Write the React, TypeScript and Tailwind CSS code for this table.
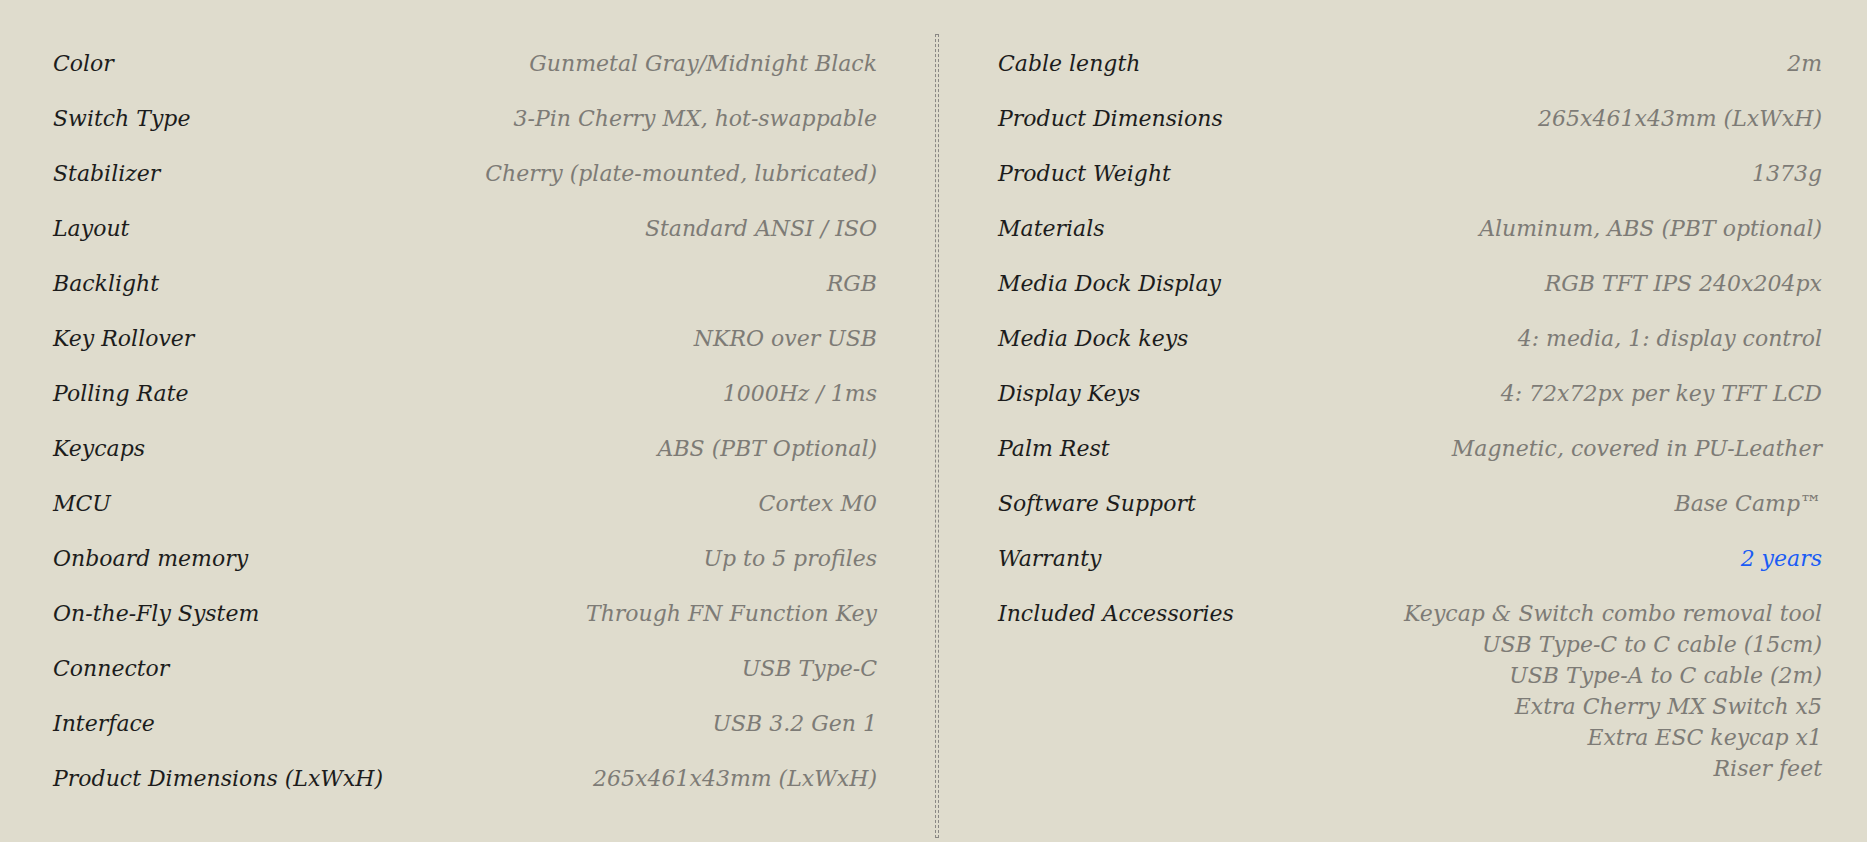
import React from "react"

type Spec = { label: string; value: string | string[]; link?: boolean }

const leftSpecs: Spec[] = [
  { label: "Color", value: "Gunmetal Gray/Midnight Black" },
  { label: "Switch Type", value: "3-Pin Cherry MX, hot-swappable" },
  { label: "Stabilizer", value: "Cherry (plate-mounted, lubricated)" },
  { label: "Layout", value: "Standard ANSI / ISO" },
  { label: "Backlight", value: "RGB" },
  { label: "Key Rollover", value: "NKRO over USB" },
  { label: "Polling Rate", value: "1000Hz / 1ms" },
  { label: "Keycaps", value: "ABS (PBT Optional)" },
  { label: "MCU", value: "Cortex M0" },
  { label: "Onboard memory", value: "Up to 5 profiles" },
  { label: "On-the-Fly System", value: "Through FN Function Key" },
  { label: "Connector", value: "USB Type-C" },
  { label: "Interface", value: "USB 3.2 Gen 1" },
  { label: "Product Dimensions (LxWxH)", value: "265x461x43mm (LxWxH)" },
]

const rightSpecs: Spec[] = [
  { label: "Cable length", value: "2m" },
  { label: "Product Dimensions", value: "265x461x43mm (LxWxH)" },
  { label: "Product Weight", value: "1373g" },
  { label: "Materials", value: "Aluminum, ABS (PBT optional)" },
  { label: "Media Dock Display", value: "RGB TFT IPS 240x204px" },
  { label: "Media Dock keys", value: "4: media, 1: display control" },
  { label: "Display Keys", value: "4: 72x72px per key TFT LCD" },
  { label: "Palm Rest", value: "Magnetic, covered in PU-Leather" },
  { label: "Software Support", value: "Base Camp™" },
  { label: "Warranty", value: "2 years", link: true },
  {
    label: "Included Accessories",
    value: [
      "Keycap & Switch combo removal tool",
      "USB Type-C to C cable (15cm)",
      "USB Type-A to C cable (2m)",
      "Extra Cherry MX Switch x5",
      "Extra ESC keycap x1",
      "Riser feet",
    ],
  },
]

const SpecRow = ({ spec }: { spec: Spec }) => (
  <div className="flex justify-between items-start py-[12px]">
    <span className="text-[#1c1c1c]">{spec.label}</span>
    {Array.isArray(spec.value) ? (
      <div className="flex flex-col items-end text-right text-[#7d7b76]">
        {spec.value.map((line) => (
          <span key={line}>{line}</span>
        ))}
      </div>
    ) : spec.link ? (
      <a href="#" className="text-right text-[#1b5cf5]">
        {spec.value}
      </a>
    ) : (
      <span className="text-right text-[#7d7b76]">{spec.value}</span>
    )}
  </div>
)

export default function App() {
  return (
    <div
      className="h-screen w-full bg-[#dfdccd] italic text-[22px] leading-[31px]"
      style={{ fontFamily: '"DejaVu Serif", serif' }}
    >
      <div className="flex h-full pt-[34px] pb-[4px]">
        <div className="w-[935px] shrink-0 pl-[53px] pr-[58px] pt-[2px]">
          {leftSpecs.map((spec) => (
            <SpecRow key={spec.label} spec={spec} />
          ))}
        </div>
        <div className="w-[4px] shrink-0 border border-dashed border-[#8a8884]" />
        <div className="flex-1 pl-[59px] pr-[45px] pt-[2px]">
          {rightSpecs.map((spec) => (
            <SpecRow key={spec.label} spec={spec} />
          ))}
        </div>
      </div>
    </div>
  )
}
